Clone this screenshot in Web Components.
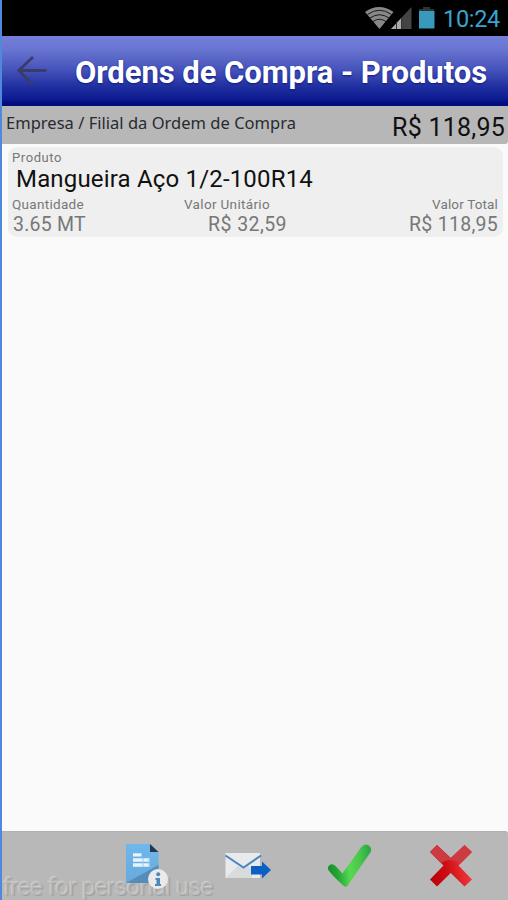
<!DOCTYPE html>
<html lang="pt-BR">
<head>
<meta charset="utf-8">
<title>Ordens de Compra - Produtos</title>
<style>
html, body { margin: 0; height: 100%; overflow: hidden; }
body { font-family: Roboto, "Liberation Sans", sans-serif; }
</style>
</head>
<body>
<order-app></order-app>
<script>
const define = (name, html, setup) => {
  const template = document.createElement('template');
  template.innerHTML = html;
  customElements.define(name, class extends HTMLElement {
    constructor() {
      super();
      this.attachShadow({ mode: 'open' }).append(template.content.cloneNode(true));
    }
    connectedCallback() { if (setup) setup(this, this.shadowRoot); }
  });
};

/* One line of text tracked so that it fills the advance width in "fit". */
define('text-line', `<style>
:host { display: block; white-space: nowrap; }
span { display: inline-block; }
</style><span></span>`, (host, root) => {
  const span = root.querySelector('span');
  const text = host.getAttribute('text');
  span.textContent = text;
  host.style.fontSize = host.getAttribute('size') + 'px';
  host.style.lineHeight = host.getAttribute('line') + 'px';
  const fit = Number(host.getAttribute('fit'));
  const gap = (fit - span.getBoundingClientRect().width) / text.length;
  span.style.letterSpacing = gap.toFixed(3) + 'px';
});

define('status-bar', `<style>
:host { display: flex; height: 36px; background: #000; color: #38a4cf; justify-content: flex-end; box-sizing: border-box; padding: 0 8px 0 0; }
svg { width: 72px; height: 36px; margin-right: 7px; }
text-line { padding-top: 1px; }
</style>
<svg viewBox="364 0 72 36">
  <path d="M365 12Q379 2 393.500 12L379.500 29Z" fill="#888"/>
  <g fill="none" stroke="#181818" stroke-width="1"><path d="M367.500 14.500Q379.500 6 391.500 14.500M370 18Q379.500 11.500 389 18M373 21.500Q379.500 17 386 21.500"/></g>
  <path d="M411.500 7V29H391Z" fill="#444"/>
  <path d="M401 18.200V29H391Z" fill="#aaa"/>
  <path d="M396.500 22V29M401.700 17V29" stroke="#333"/>
  <path d="M423 7H430V9H434V12H419V9H423Z" fill="#333"/>
  <path d="M419 11H434.500V28.500H419Z" fill="#3999bd"/>
</svg>
<text-line text="10:24" size="23.500" line="36" fit="57"></text-line>`);

define('title-bar', `<style>
:host { display: flex; height: 70px; box-sizing: border-box; color: #fff; font-weight: 700;
  background: linear-gradient(#737fd8 0, #6874d0 20%, #4553bb 48%, #1e2d9e 74%, #0c1b90 90%, #000d80 96%, #000d7c); }
svg { width: 73px; height: 70px; }
text-line { padding-top: 2px; text-shadow: 0 1px 2px #101a7a; }
</style>
<svg viewBox="2 36 73 70" fill="none" stroke="#393c68" stroke-width="2.800"><path d="M46.500 70.500H19M33 57L18.800 70.500L33 84.500"/></svg>
<text-line text="Ordens de Compra - Produtos" size="31" line="70" fit="412"></text-line>`);

define('summary-bar', `<style>
:host { display: flex; height: 38px; box-sizing: border-box; justify-content: space-between; background: #b7b7b7; padding: 0 3px 0 4px; border-radius: 0 0 3px 0; }
.company { font-family: "Noto Sans", "Open Sans", sans-serif; color: #282a30; }
.total { color: #101010; padding-top: 3px; }
</style>
<text-line class="company" text="Empresa / Filial da Ordem de Compra" size="16.500" line="34" fit="290"></text-line>
<text-line class="total" text="R$ 118,95" size="25" line="38" fit="113"></text-line>`);

define('product-card', `<style>
:host { display: block; height: 90px; box-sizing: border-box; margin: 3px 5px 0 6px; padding: 3px 5px 0 4px; border-radius: 9px; background: #efefef; color: #777; }
.name { color: #111; margin-left: 4px; }
.cells { display: grid; grid-template-columns: 172px 103px 1fr; }
.cells > div { display: flex; flex-direction: column; }
.mid .label { margin-left: 0; }
.mid .value { margin-left: 24px; }
.end { align-items: flex-end; }
.first .value { margin-left: 1px; }
</style>
<text-line text="Produto" size="13" line="16" fit="50"></text-line>
<text-line class="name" text="Mangueira Aço 1/2-100R14" size="24" line="26" fit="297"></text-line>
<div class="cells">
  <div class="first"><text-line class="label" text="Quantidade" size="13.500" line="25" fit="72"></text-line>
  <text-line class="value" text="3.65 MT" size="19.500" line="15" fit="73"></text-line></div>
  <div class="mid"><text-line class="label" text="Valor Unitário" size="13.500" line="25" fit="86"></text-line>
  <text-line class="value" text="R$ 32,59" size="19.500" line="15" fit="79"></text-line></div>
  <div class="end"><text-line class="label" text="Valor Total" size="13.500" line="25" fit="66"></text-line>
  <text-line class="value" text="R$ 118,95" size="19.500" line="15" fit="89"></text-line></div>
</div>`);

define('doc-icon', `<style>:host { display: block; width: 46px; height: 48px; } svg { display: block; }</style>
<svg width="46" height="48" viewBox="124 842 46 48">
  <defs><linearGradient id="b" x2="0" y2="1"><stop stop-color="#6fb8ec"/><stop offset="1" stop-color="#68a9db"/></linearGradient></defs>
  <path d="M126 844H150L158.500 852V883H126Z" fill="url(#b)"/>
  <path d="M126 883L158.500 865V883Z" fill="#568cb8"/>
  <path d="M150 844V852H158.500Z" fill="#24394b"/>
  <path d="M133 854.800H141.500M133 860H149.500M133 865H149.500" stroke="#e5f4ff" stroke-width="3.300"/>
  <path d="M143 858V867M149 859V866" stroke="#9acbef" stroke-width="1"/>
  <circle cx="158" cy="879" r="10" fill="#e9eaeb"/>
  <circle cx="158.200" cy="874.300" r="2" fill="#4c88bb"/>
  <path d="M155.500 878H160V884H161V886H155V884H156.500V880H155.500Z" fill="#4c88bb"/>
</svg>`);

define('mail-icon', `<style>:host { display: block; width: 48px; height: 34px; } svg { display: block; }</style>
<svg width="48" height="34" viewBox="224 850 48 34">
  <path d="M225.500 854H260V879H225.500Z" fill="#e9eaeb"/>
  <path d="M225.500 879L238 867L243.500 870L248 867L252 871V879Z" fill="#d9dadc"/>
  <path d="M225.500 856.500L243.500 868.500L261 856.500" fill="none" stroke="#4786c3" stroke-width="2"/>
  <path d="M251 867H262V862.500L271 871L262 879.500V875.500H251Z" fill="#0c5fc4"/>
</svg>`);

define('check-icon', `<style>:host { display: block; width: 46px; height: 46px; } svg { display: block; }</style>
<svg width="46" height="46" viewBox="326 842 46 46">
  <defs><linearGradient id="g" x1="328" y1="866" x2="370" y2="862" gradientUnits="userSpaceOnUse"><stop stop-color="#159128"/><stop offset=".22" stop-color="#26a637"/><stop offset=".5" stop-color="#57d951"/><stop offset=".75" stop-color="#4bc84c"/><stop offset="1" stop-color="#2dab46"/></linearGradient></defs>
  <path d="M328.300 870Q327 866 330.500 864.500Q334 863.500 336.500 867L342.500 873.500L361 847.500Q364 843.500 368 845Q372 847 371 851.500L347 886.500H344.500Q334.500 878 328.300 870Z" fill="url(#g)"/>
</svg>`);

define('cross-icon', `<style>:host { display: block; width: 44px; height: 44px; } svg { display: block; }</style>
<svg width="44" height="44" viewBox="429 845 44 44">
  <defs><linearGradient id="r" x1="430" y1="885" x2="472" y2="875" gradientUnits="userSpaceOnUse"><stop stop-color="#b90009"/><stop offset=".45" stop-color="#cd0d12"/><stop offset="1" stop-color="#f43b3e"/></linearGradient></defs>
  <path d="M430 853L437 846L450.800 859L464.500 846L472 853L458.500 866.500L472 880.500L464.500 887.500L450.800 874L437 887.500L430 880.500L443.500 866.500Z" fill="url(#r)"/>
  <path d="M430 853L437 846L450.800 859L464.500 846L472 853L460.500 864.500Q450 858 441 864Z" fill="#cd3b40"/>
</svg>`);

define('action-bar', `<style>
:host { display: flex; position: relative; height: 69px; box-sizing: border-box; align-items: center; background: #b8b8b8; border-top: 1px solid #b0b0b0; padding: 0 35px 1px 122px; border-radius: 0 3px 0 0; overflow: hidden; }
.mark { position: absolute; left: 1px; bottom: -3px; color: #b8b8b8; font-weight: 300; text-shadow: -1px -1px 1px #d4d4d4, 1px 1px 1px #999; }
doc-icon { z-index: 1; }
mail-icon { margin-left: 54px; }
check-icon { margin-left: 54px; margin-top: -2px; }
cross-icon { margin-left: 57px; }
</style>
<text-line class="mark" text="free for personal use" size="24.500" line="33" fit="210"></text-line>
<doc-icon></doc-icon><mail-icon></mail-icon><check-icon></check-icon><cross-icon></cross-icon>`);

define('order-app', `<style>
:host { display: flex; flex-direction: column; height: 900px; width: 508px; box-sizing: border-box; border-left: 2px solid #5088dc; background: #fafafa; }
main { flex: 1; min-height: 0; }
</style>
<status-bar></status-bar><title-bar></title-bar><summary-bar></summary-bar>
<main><product-card></product-card></main>
<action-bar></action-bar>`);
</script>
</body>
</html>
